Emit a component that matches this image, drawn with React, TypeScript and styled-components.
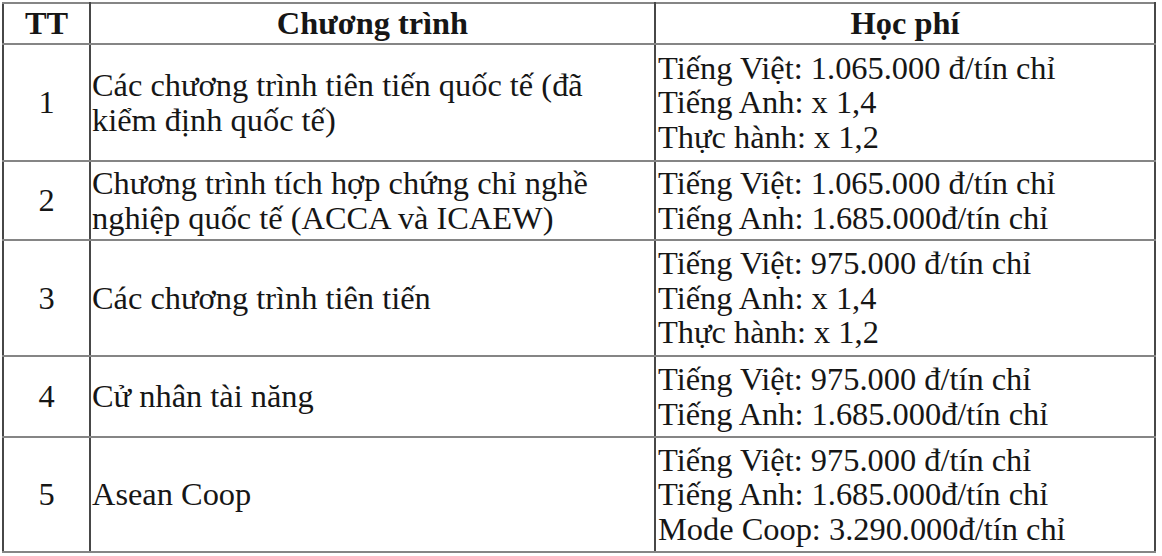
import React from "react";
import styled, { createGlobalStyle } from "styled-components";

const GlobalStyle = createGlobalStyle`
	html, body {
		margin: 0;
		padding: 0;
		background: #ffffff;
	}
`;

const Page = styled.div`
	padding: 2px 0 0 2px;
`;

const Table = styled.table`
	width: 1154px;
	border-collapse: collapse;
	table-layout: fixed;
	font-family: "Liberation Serif", "Times New Roman", serif;
	font-size: 32.4px;
	line-height: 34.5px;
	color: #161616;
`;

const Col = styled.col<{ $width: number }>`
	width: ${(p) => p.$width}px;
`;

const cellBorders = `
	border-top: 2px solid #858585;
	border-bottom: 2px solid #858585;
	border-left: 2px solid #474747;
	border-right: 2px solid #474747;
`;

const HeadCell = styled.th`
	height: 39px;
	padding: 0;
	${cellBorders}
	font-family: "Liberation Serif", "Times New Roman", serif;
	font-size: 32.4px;
	font-weight: bold;
	text-align: center;
	vertical-align: middle;
`;

const Row = styled.tr<{ $height: number }>`
	height: ${(p) => p.$height}px;
`;

const NumCell = styled.td`
	padding: 0;
	${cellBorders}
	font-family: "Liberation Serif", "Times New Roman", serif;
	font-size: 32.4px;
	text-align: center;
	vertical-align: middle;
`;

const TextCell = styled.td<{ $indent: number }>`
	padding: 0 0 0 ${(p) => p.$indent}px;
	${cellBorders}
	font-family: "Liberation Serif", "Times New Roman", serif;
	font-size: 32.4px;
	text-align: left;
	vertical-align: middle;
	white-space: pre-line;
`;

interface IProgram {
	id: number;
	name: string;
	fees: string[];
	height: number;
}

const programs: IProgram[] = [
	{
		id: 1,
		name: "Các chương trình tiên tiến quốc tế (đã\nkiểm định quốc tế)",
		fees: [
			"Tiếng Việt: 1.065.000 đ/tín chỉ",
			"Tiếng Anh: x 1,4",
			"Thực hành: x 1,2",
		],
		height: 117,
	},
	{
		id: 2,
		name: "Chương trình tích hợp chứng chỉ nghề\nnghiệp quốc tế (ACCA và ICAEW)",
		fees: ["Tiếng Việt: 1.065.000 đ/tín chỉ", "Tiếng Anh: 1.685.000đ/tín chỉ"],
		height: 79,
	},
	{
		id: 3,
		name: "Các chương trình tiên tiến",
		fees: [
			"Tiếng Việt: 975.000 đ/tín chỉ",
			"Tiếng Anh: x 1,4",
			"Thực hành: x 1,2",
		],
		height: 116,
	},
	{
		id: 4,
		name: "Cử nhân tài năng",
		fees: ["Tiếng Việt: 975.000 đ/tín chỉ", "Tiếng Anh: 1.685.000đ/tín chỉ"],
		height: 81,
	},
	{
		id: 5,
		name: "Asean Coop",
		fees: [
			"Tiếng Việt: 975.000 đ/tín chỉ",
			"Tiếng Anh: 1.685.000đ/tín chỉ",
			"Mode Coop: 3.290.000đ/tín chỉ",
		],
		height: 115,
	},
];

export default function App() {
	return (
		<Page>
			<GlobalStyle />
			<Table>
				<colgroup>
					<Col $width={87} />
					<Col $width={565} />
					<Col $width={500} />
				</colgroup>
				<thead>
					<tr>
						<HeadCell>TT</HeadCell>
						<HeadCell>Chương trình</HeadCell>
						<HeadCell>Học phí</HeadCell>
					</tr>
				</thead>
				<tbody>
					{programs.map((item) => (
						<Row key={item.id} $height={item.height}>
							<NumCell>{item.id}</NumCell>
							<TextCell $indent={1}>{item.name}</TextCell>
							<TextCell $indent={2}>{item.fees.join("\n")}</TextCell>
						</Row>
					))}
				</tbody>
			</Table>
		</Page>
	);
}
